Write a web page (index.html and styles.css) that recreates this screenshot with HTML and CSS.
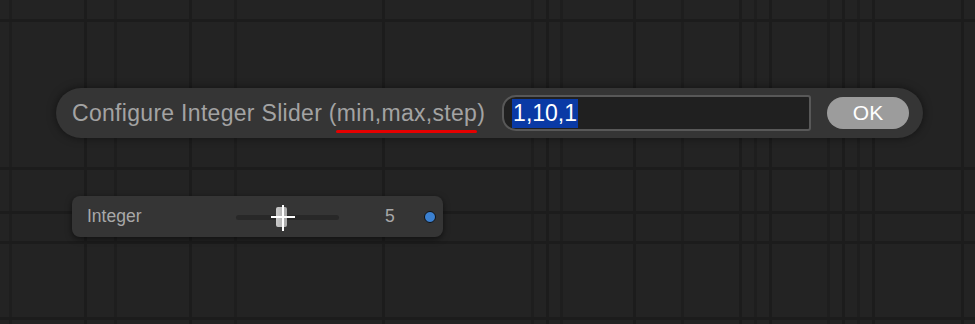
FILE: index.html
```html
<!DOCTYPE html>
<html lang="en">
<head>
    <meta charset="UTF-8">
    <meta name="viewport" content="width=device-width, initial-scale=1.0">
    <title>Integer Slider</title>
    <link rel="stylesheet" href="styles.css">
</head>
<body>
    <div class="canvas">
        <div class="prompt-dialog">
            <span class="prompt-title">Configure Integer Slider (<span class="marked">min,max,step</span>)</span>
            <div class="prompt-input"><span class="selected">1,10,1</span></div>
            <button class="ok-btn">OK</button>
        </div>

        <div class="slider-node">
            <span class="node-label">Integer</span>
            <div class="track">
                <div class="thumb"></div>
                <div class="cursor"></div>
            </div>
            <span class="node-value">5</span>
            <span class="output-dot"></span>
        </div>
    </div>
</body>
</html>
```

FILE: styles.css
```css
html, body {
    margin: 0;
    height: 100%;
}
body {
    font-family: "Liberation Sans", Arial, sans-serif;
    background-color: #232323;
    background-image:
        linear-gradient(#1c1c1c, #1c1c1c), linear-gradient(#1c1c1c, #1c1c1c),
        linear-gradient(#1c1c1c, #1c1c1c), linear-gradient(#1c1c1c, #1c1c1c),
        linear-gradient(#1c1c1c, #1c1c1c), linear-gradient(#1e1e1e, #1e1e1e),
        linear-gradient(#1c1c1c, #1c1c1c), linear-gradient(#1e1e1e, #1e1e1e),
        linear-gradient(#1c1c1c, #1c1c1c), linear-gradient(#1e1e1e, #1e1e1e),
        linear-gradient(#1c1c1c, #1c1c1c), linear-gradient(#1e1e1e, #1e1e1e),
        linear-gradient(#1c1c1c, #1c1c1c), linear-gradient(#1e1e1e, #1e1e1e),
        linear-gradient(#1c1c1c, #1c1c1c), linear-gradient(#1e1e1e, #1e1e1e),
        linear-gradient(#1c1c1c, #1c1c1c), linear-gradient(#1e1e1e, #1e1e1e),
        linear-gradient(#1c1c1c, #1c1c1c), linear-gradient(#1e1e1e, #1e1e1e),
        linear-gradient(#1c1c1c, #1c1c1c), linear-gradient(#1e1e1e, #1e1e1e),
        linear-gradient(#1c1c1c, #1c1c1c), linear-gradient(#1c1c1c, #1c1c1c);
    background-repeat: no-repeat;
    background-size:
        100% 3px, 100% 3px, 100% 3px, 100% 3px, 100% 3px,
        3px 100%, 3px 100%, 3px 100%, 3px 100%, 3px 100%,
        3px 100%, 3px 100%, 3px 100%, 3px 100%, 3px 100%,
        3px 100%, 3px 100%, 3px 100%, 3px 100%, 3px 100%,
        3px 100%, 3px 100%, 3px 100%, 3px 100%;
    background-position:
        0 19px, 0 167px, 0 211px, 0 241px, 0 317px,
        9px 0, 84px 0, 114px 0, 189px 0, 234px 0,
        382px 0, 531px 0, 546px 0, 560px 0, 633px 0,
        681px 0, 739px 0, 754px 0, 769px 0, 827px 0,
        842px 0, 857px 0, 872px 0, 961px 0;
}
.canvas {
    padding-top: 88px;
}
.prompt-dialog {
    display: flex;
    align-items: center;
    box-sizing: border-box;
    width: 867px;
    height: 50px;
    margin-left: 56px;
    padding: 0 14px 0 16px;
    background: #353535;
    border-radius: 25px;
    box-shadow: 0 0 8px rgba(0, 0, 0, 0.5);
}
.prompt-title {
    font-size: 23px;
    letter-spacing: 0.3px;
    color: #a3a3a3;
    white-space: nowrap;
}
.marked {
    position: relative;
}
.marked::after {
    content: "";
    position: absolute;
    left: -1px;
    right: 0;
    bottom: -7px;
    height: 3px;
    border-radius: 2px;
    background: #e50000;
}
.prompt-input {
    display: flex;
    align-items: center;
    box-sizing: border-box;
    width: 309px;
    height: 36px;
    margin-left: 17px;
    padding-left: 8px;
    background: #202020;
    border: 2px solid #585858;
    border-radius: 14px 3px 3px 14px;
}
.selected {
    font-size: 23px;
    line-height: 29px;
    color: #fff;
    background: #0a3aa5;
    padding: 0 1px;
}
.ok-btn {
    width: 82px;
    height: 32px;
    margin-left: 16px;
    border: none;
    border-radius: 16px;
    background: #9c9c9c;
    color: #fff;
    font-family: inherit;
    font-size: 21px;
}
.slider-node {
    display: flex;
    align-items: center;
    box-sizing: border-box;
    width: 371px;
    height: 41px;
    margin: 58px 0 0 72px;
    padding: 0 7px 0 15px;
    background: #353535;
    border-radius: 8px;
    box-shadow: 0 2px 6px rgba(0, 0, 0, 0.55);
}
.node-label {
    font-size: 17.5px;
    color: #a8a8a8;
    width: 149px;
}
.track {
    position: relative;
    width: 103px;
    height: 5px;
    margin-top: 1px;
    background: #282828;
    border-radius: 3px;
}
.thumb {
    position: absolute;
    left: 40px;
    top: -8px;
    width: 11px;
    height: 20px;
    border-radius: 2px;
    background: linear-gradient(90deg, #c9c9c9, #a8a8a8);
}
.cursor {
    position: absolute;
    left: 35px;
    top: -10px;
    width: 24px;
    height: 26px;
    background:
        linear-gradient(#fff, #fff) 0 11px / 24px 2px no-repeat,
        linear-gradient(#fff, #fff) 11px 0 / 2px 26px no-repeat;
}
.node-value {
    margin-left: 46px;
    font-size: 17.5px;
    color: #a8a8a8;
}
.output-dot {
    width: 10px;
    height: 10px;
    margin-left: 29px;
    border: 1px solid #111;
    border-radius: 50%;
    background: #3b80d0;
}
```
